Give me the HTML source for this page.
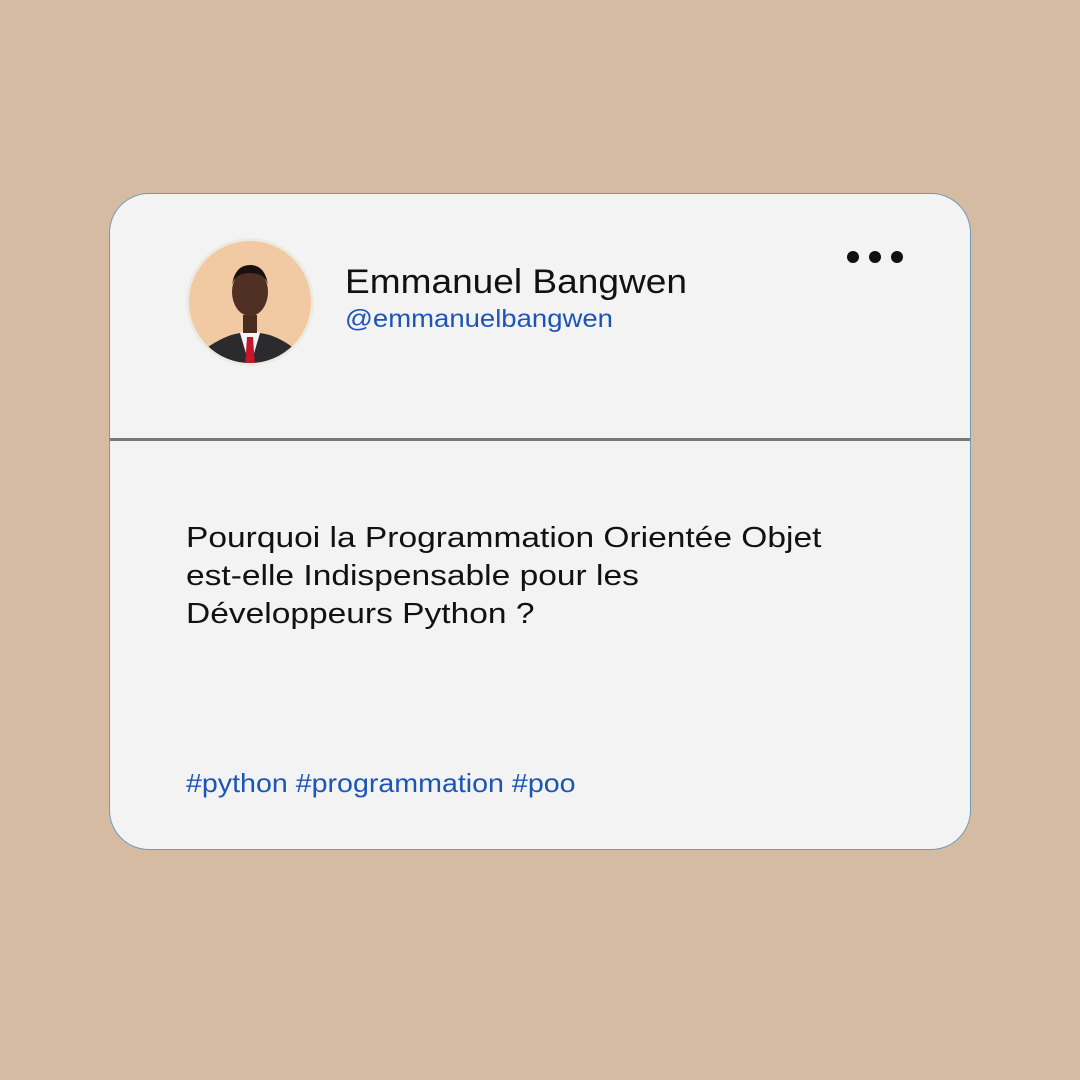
<!DOCTYPE html>
<html><head><meta charset="utf-8"><style>
body{margin:0;width:1080px;height:1080px;background:#d4bba2;position:relative;overflow:hidden;font-family:"Liberation Sans",sans-serif}
.card{position:absolute;left:109px;top:193px;width:860px;height:655px;background:#f3f3f3;border:1.5px solid #6e9db8;border-radius:40px;overflow:hidden}
.div{position:absolute;left:0;right:0;top:244px;height:3px;background:#777}
.t{position:absolute;white-space:nowrap;transform-origin:left top}
</style></head><body>
<div class="card">
<div class="div"></div>
</div>
<svg style="position:absolute;left:185px;top:237px" width="130" height="130" viewBox="0 0 130 130">
<defs><clipPath id="c"><circle cx="65" cy="65" r="61"/></clipPath></defs>
<circle cx="65" cy="65" r="64" fill="#ecebe2"/>
<g clip-path="url(#c)">
<rect width="130" height="130" fill="#f1c9a3"/>
<path d="M10 130 L20 112 Q40 98 55 96 L65 100 L75 96 Q92 98 110 112 L120 130Z" fill="#2b2b2d"/>
<path d="M55 96 L65 130 L75 96 L68 92 L62 92Z" fill="#f4f4f6"/>
<path d="M62 100 L68 100 L70 130 L60 130Z" fill="#c2182a"/>
<rect x="58" y="78" width="14" height="18" fill="#4a2c1e"/>
<ellipse cx="65" cy="55" rx="18" ry="24" fill="#4f3022"/>
<path d="M47 48 Q50 28 65 28 Q80 28 83 48 Q80 36 65 36 Q50 36 47 48Z" fill="#1a1010"/>
</g>
</svg>
<div class="t" style="left:345px;top:263px;font-size:34px;color:#111;transform:scaleX(1.09)">Emmanuel Bangwen</div>
<div class="t" style="left:345px;top:305px;font-size:25px;color:#1b55b5;transform:scaleX(1.1)">@emmanuelbangwen</div>
<div style="position:absolute;left:847px;top:251px">
<span style="position:absolute;left:0;width:12px;height:12px;border-radius:50%;background:#111"></span>
<span style="position:absolute;left:22px;width:12px;height:12px;border-radius:50%;background:#111"></span>
<span style="position:absolute;left:44px;width:12px;height:12px;border-radius:50%;background:#111"></span>
</div>
<div class="t" style="left:186px;top:519px;font-size:29px;line-height:38px;color:#111;transform:scaleX(1.156)">Pourquoi la Programmation Orientée Objet<br>est-elle Indispensable pour les<br>Développeurs Python ?</div>
<div class="t" style="left:186px;top:768px;font-size:26px;color:#1b55b5;transform:scaleX(1.1)">#python #programmation #poo</div>
</body></html>
